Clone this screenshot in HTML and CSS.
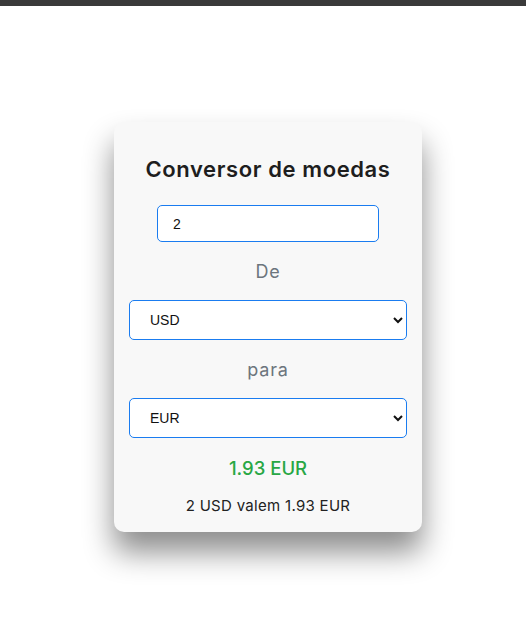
FILE: index.html
```html
<!DOCTYPE html>
<html lang="pt">
<head>
<meta charset="utf-8">
<title>Conversor de moedas</title>
<link rel="stylesheet" href="styles.css">
</head>
<body>
<div class="topbar"></div>
<main class="page">
  <div class="card">
    <h2 class="title">Conversor de moedas</h2>
    <input class="amount" type="number" value="2">
    <p class="label">De</p>
    <select class="currency">
      <option selected>USD</option>
      <option>EUR</option>
      <option>BRL</option>
    </select>
    <p class="label">para</p>
    <select class="currency">
      <option>USD</option>
      <option selected>EUR</option>
      <option>BRL</option>
    </select>
    <p class="result">1.93 EUR</p>
    <p class="summary">2 USD valem 1.93 EUR</p>
  </div>
</main>
</body>
</html>
```

FILE: styles.css
```css
html, body {
  margin: 0;
  padding: 0;
  background: #ffffff;
}
body {
  font-family: Inter, "Open Sans", sans-serif;
  min-height: 643px;
}
.topbar {
  height: 6px;
  background: #3a3a3a;
}
.page {
  display: flex;
  justify-content: center;
  padding: 116px 0 100px 10px;
}
.card {
  width: 278px;
  background: #f8f8f8;
  border-radius: 10px;
  padding: 20px 15px 15px;
  box-shadow: 0 20px 30px rgba(0, 0, 0, 0.45);
  display: flex;
  flex-direction: column;
  align-items: center;
}
.title {
  margin: 12px 0 0;
  font-size: 22px;
  line-height: 30px;
  font-weight: 600;
  color: #1e1e1e;
  letter-spacing: 0.6px;
}
.amount {
  box-sizing: border-box;
  width: 222px;
  height: 37px;
  margin-top: 21px;
  padding: 0 15px;
  border: 1px solid #1a7cf0;
  border-radius: 5px;
  background: #fff;
  font-family: "Liberation Sans", Arial, sans-serif;
  font-size: 14px;
  color: #111;
  outline: none;
  -moz-appearance: textfield;
}
.amount::-webkit-outer-spin-button,
.amount::-webkit-inner-spin-button {
  -webkit-appearance: none;
  margin: 0;
}
.label {
  margin: 18px 0 0;
  font-size: 18px;
  line-height: 24px;
  color: #6c757d;
  letter-spacing: 0.8px;
}
.currency {
  box-sizing: border-box;
  width: 278px;
  height: 40px;
  margin-top: 16px;
  padding: 0 15px 0 16px;
  border: 1px solid #1a7cf0;
  border-radius: 5px;
  background: #fff;
  font-family: "Liberation Sans", Arial, sans-serif;
  font-size: 14px;
  color: #111;
  outline: none;
}
.result {
  margin: 16px 0 0;
  font-size: 18.5px;
  line-height: 28px;
  font-weight: 500;
  color: #28a745;
}
.summary {
  margin: 13px 0 0;
  font-size: 15px;
  line-height: 22px;
  color: #222;
  letter-spacing: 0.3px;
}
```
